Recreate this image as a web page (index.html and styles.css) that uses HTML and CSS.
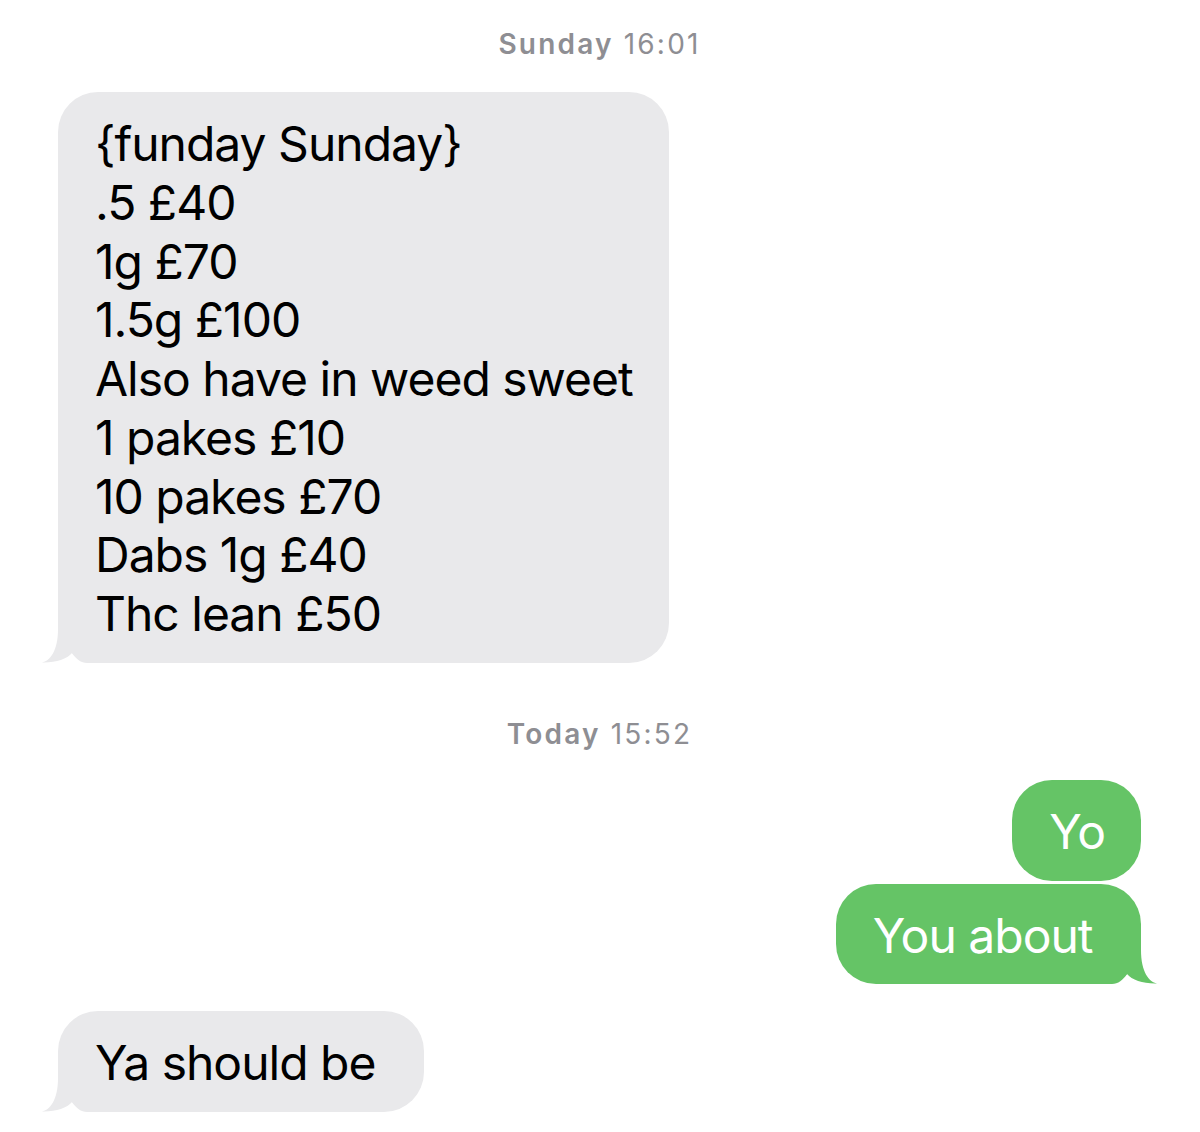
FILE: index.html
```html
<!DOCTYPE html>
<html lang="en">
<head>
    <meta charset="UTF-8">
    <meta name="viewport" content="width=device-width, initial-scale=1.0">
    <title>Messages</title>
    <link rel="stylesheet" href="styles.css">
</head>
<body>
    <main class="thread">
        <div class="stamp"><strong>Sunday</strong> 16:01</div>

        <div class="row incoming">
            <div class="bubble grey has-tail">
                {funday Sunday}<br>
                .5 £40<br>
                1g £70<br>
                1.5g £100<br>
                Also have in weed sweet<br>
                1 pakes £10<br>
                10 pakes £70<br>
                Dabs 1g £40<br>
                Thc lean £50
                <svg class="tail" viewBox="0 0 60 40"><path d="M1,39.5 C9,38 17,28 17,6 L17,0 L60,0 L60,40 L46,40 C40,40 35,36 31,30 C26,36 14,40 1,39.5 Z"/></svg>
            </div>
        </div>

        <div class="stamp later"><strong>Today</strong> 15:52</div>

        <div class="row outgoing">
            <div class="bubble green">Yo</div>
        </div>
        <div class="row outgoing next">
            <div class="bubble green has-tail">
                You about&nbsp;
                <svg class="tail" viewBox="0 0 60 40"><path d="M1,39.5 C9,38 17,28 17,6 L17,0 L60,0 L60,40 L46,40 C40,40 35,36 31,30 C26,36 14,40 1,39.5 Z"/></svg>
            </div>
        </div>

        <div class="row incoming switch">
            <div class="bubble grey has-tail">
                Ya should be&nbsp;
                <svg class="tail" viewBox="0 0 60 40"><path d="M1,39.5 C9,38 17,28 17,6 L17,0 L60,0 L60,40 L46,40 C40,40 35,36 31,30 C26,36 14,40 1,39.5 Z"/></svg>
            </div>
        </div>
    </main>
</body>
</html>
```

FILE: styles.css
```css
/* General */
body {
    margin: 0;
    background-color: #ffffff;
    font-family: 'Inter', 'Liberation Sans', sans-serif;
}

.thread {
    display: flex;
    flex-direction: column;
    padding: 28px 59px 0 58px;
}

/* Timestamps */
.stamp {
    text-align: center;
    color: #8e8e93;
    font-size: 28px;
    line-height: 32px;
    letter-spacing: 2.2px;
    margin-bottom: 32px;
}
.stamp strong {
    font-weight: 600;
}
.stamp.later {
    margin-top: 55px;
    margin-bottom: 30px;
}

/* Rows */
.row {
    display: flex;
}
.row.incoming {
    justify-content: flex-start;
}
.row.outgoing {
    justify-content: flex-end;
}
.row.next {
    margin-top: 3px;
}
.row.switch {
    margin-top: 27px;
}

/* Bubbles */
.bubble {
    position: relative;
    z-index: 0;
    font-size: 48px;
    line-height: 58.75px;
    letter-spacing: -1px;
    padding: 23px 36px 19px 37px;
    border-radius: 40px;
}
.bubble.grey {
    background-color: #e9e9eb;
    color: #000000;
}
.bubble.green {
    background-color: #65c466;
    color: #ffffff;
}

/* Tails */
.tail {
    position: absolute;
    z-index: -1;
    bottom: 0;
    width: 60px;
    height: 40px;
}
.grey .tail {
    left: -17px;
    fill: #e9e9eb;
}
.green .tail {
    right: -17px;
    fill: #65c466;
    transform: scaleX(-1);
}
```
